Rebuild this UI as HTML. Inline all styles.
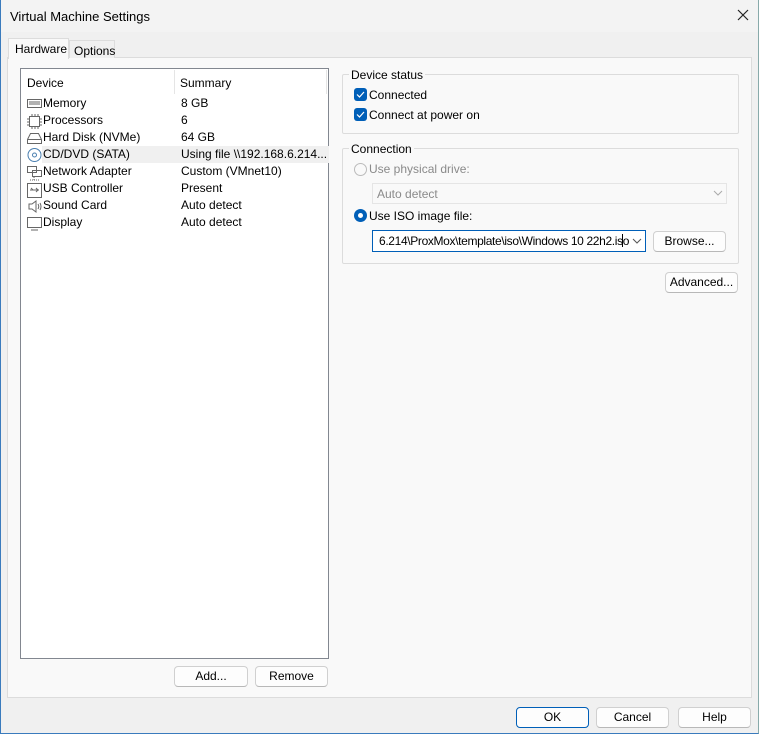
<!DOCTYPE html>
<html><head><meta charset="utf-8"><style>
*{box-sizing:border-box;margin:0;padding:0}
body{width:759px;height:734px;overflow:hidden;background:#f0f0f0;font-family:"Liberation Sans",sans-serif;font-size:12px;color:#000;position:relative}
.a{position:absolute;white-space:nowrap}
.win{left:0;top:0;width:759px;height:734px;border:1px solid #3a7bbd;border-top:none;border-right-color:#8aa;background:#f0f0f0}
.title{left:1px;top:0;width:757px;height:32px;background:#f3f3f3}
.btn{position:absolute;background:#fdfdfd;border:1px solid #d0d0d0;border-bottom-color:#b8b8b8;border-radius:4px;text-align:center;line-height:18px;font-size:12px}
.grp{position:absolute;border:1px solid #dcdcdc;border-radius:2px}
.lg{position:absolute;top:-7px;left:6px;background:#f9f9f9;padding:0 2px}
.cb{position:absolute;width:13px;height:13px;background:#005fb8;border-radius:3px}
.row{position:absolute;left:1px;width:307px;height:17px;line-height:17px}
.row span{position:absolute}
</style></head><body>
<div class="a win"></div>
<div class="a title"></div>
<div class="a" style="left:10px;top:9px;font-size:13px">Virtual Machine Settings</div>
<svg class="a" style="left:737px;top:9px" width="12" height="12"><path d="M1 1L11 11M11 1L1 11" stroke="#222" stroke-width="1.2"/></svg>
<div class="a" style="left:7px;top:57px;width:745px;height:641px;background:#f9f9f9;border:1px solid #dcdcdc"></div>
<div class="a" style="left:8px;top:38px;width:61px;height:21px;background:#f9f9f9;border:1px solid #dcdcdc;border-bottom:none;padding:3px 0 0 6px">Hardware</div>
<div class="a" style="left:69px;top:40px;width:46px;height:18px;background:#f0f0f0;border:1px solid #dcdcdc;border-bottom:none;padding:3px 0 0 4px">Options</div>
<div class="a" style="left:20px;top:68px;width:309px;height:591px;background:#fff;border:1px solid #828790">
 <div class="a" style="left:6px;top:7px">Device</div>
 <div class="a" style="left:153px;top:1px;width:1px;height:24px;background:#e5e5e5"></div>
 <div class="a" style="left:159px;top:7px">Summary</div>
 <div class="a" style="left:305px;top:1px;width:1px;height:24px;background:#e5e5e5"></div>
 <div class="a" style="left:21px;top:77px;width:287px;height:17px;background:#f0f0f0"></div>
 <div class="row" style="top:26px"><span style="left:21px">Memory</span><span style="left:159px">8 GB</span></div>
 <div class="row" style="top:43px"><span style="left:21px">Processors</span><span style="left:159px">6</span></div>
 <div class="row" style="top:60px"><span style="left:21px">Hard Disk (NVMe)</span><span style="left:159px">64 GB</span></div>
 <div class="row" style="top:77px"><span style="left:21px">CD/DVD (SATA)</span><span style="left:159px">Using file \\192.168.6.214...</span></div>
 <div class="row" style="top:94px"><span style="left:21px">Network Adapter</span><span style="left:159px">Custom (VMnet10)</span></div>
 <div class="row" style="top:111px"><span style="left:21px">USB Controller</span><span style="left:159px">Present</span></div>
 <div class="row" style="top:128px"><span style="left:21px">Sound Card</span><span style="left:159px">Auto detect</span></div>
 <div class="row" style="top:145px"><span style="left:21px">Display</span><span style="left:159px">Auto detect</span></div>
 <svg class="a" style="left:5px;top:28px" width="17" height="136" fill="none" stroke="#666">
  <rect x="1.5" y="2.5" width="14" height="8"/><path d="M3 5h11M3 7h11"/>
  <rect x="3.5" y="19.5" width="10" height="10"/><path d="M1 22h2M1 25h2M1 28h2M14 22h2M14 25h2M14 28h2M6 17v2M9 17v2M12 17v2M6 30v2M9 30v2M12 30v2"/>
  <path d="M1.5 46.5h14v-4l-3-6h-8l-3 6z M1.5 42.5h14"/>
  <circle cx="8.5" cy="58" r="6.5" stroke="#4a7fb0"/><circle cx="8.5" cy="58" r="2" stroke="#4a7fb0"/>
  <rect x="1.5" y="69.5" width="9" height="6"/><rect x="6.5" y="73.5" width="9" height="6"/><path d="M8 80v3M4 83h9" stroke-dasharray="1 1"/>
  <rect x="1.5" y="86.5" width="14" height="14"/><path d="M4 93h9M10 91l2 2-2 2M7 93l-2-2"/>
  <path d="M3 107h3l4-3v11l-4-3H3z M12 107q1.5 2.5 0 5 M14 106q2 3.5 0 7"/>
  <rect x="1.5" y="120.5" width="14" height="10"/><path d="M5 133h7"/>
 </svg>
</div>
<div class="btn" style="left:174px;top:666px;width:74px;height:21px">Add...</div>
<div class="btn" style="left:255px;top:666px;width:73px;height:21px">Remove</div>
<div class="grp" style="left:342px;top:74px;width:397px;height:60px"><div class="lg">Device status</div></div>
<div class="cb" style="left:354px;top:88px"></div><svg class="a" style="left:356px;top:90px" width="9" height="9"><path d="M1 4.5l2.5 2.5L8 2" stroke="#fff" fill="none" stroke-width="1.2"/></svg>
<div class="a" style="left:369px;top:88px">Connected</div>
<div class="cb" style="left:354px;top:108px"></div><svg class="a" style="left:356px;top:110px" width="9" height="9"><path d="M1 4.5l2.5 2.5L8 2" stroke="#fff" fill="none" stroke-width="1.2"/></svg>
<div class="a" style="left:369px;top:108px">Connect at power on</div>
<div class="grp" style="left:342px;top:148px;width:397px;height:116px"><div class="lg">Connection</div></div>
<div class="a" style="left:354px;top:163px;width:13px;height:13px;border:1px solid #bbb;border-radius:50%;background:#f9f9f9"></div>
<div class="a" style="left:369px;top:162px;color:#8a8a8a">Use physical drive:</div>
<div class="a" style="left:372px;top:183px;width:355px;height:21px;border:1px solid #e5e5e5;background:#f9f9f9;color:#8a8a8a;padding:3px 0 0 4px">Auto detect</div>
<svg class="a" style="left:713px;top:190px" width="10" height="6"><path d="M1 1l4 4 4-4" stroke="#aaa" fill="none"/></svg>
<div class="a" style="left:354px;top:209px;width:13px;height:13px;border-radius:50%;background:#005fb8"></div>
<div class="a" style="left:358px;top:213px;width:5px;height:5px;border-radius:50%;background:#fff"></div>
<div class="a" style="left:369px;top:209px">Use ISO image file:</div>
<div class="a" style="left:372px;top:230px;width:274px;height:22px;border:1px solid #005fb8;background:#fff;padding:3px 0 0 6px;overflow:hidden;letter-spacing:-0.35px">6.214\ProxMox\template\iso\Windows 10 22h2.iso</div>
<div class="a" style="left:622px;top:234px;width:1px;height:13px;background:#000"></div>
<svg class="a" style="left:632px;top:238px" width="10" height="6"><path d="M1 1l4 4 4-4" stroke="#555" fill="none"/></svg>
<div class="btn" style="left:653px;top:231px;width:73px;height:21px">Browse...</div>
<div class="btn" style="left:665px;top:272px;width:73px;height:21px">Advanced...</div>
<div class="btn" style="left:516px;top:707px;width:73px;height:21px;border-color:#005fb8">OK</div>
<div class="btn" style="left:596px;top:707px;width:73px;height:21px">Cancel</div>
<div class="btn" style="left:678px;top:707px;width:73px;height:21px">Help</div>
</body></html>
